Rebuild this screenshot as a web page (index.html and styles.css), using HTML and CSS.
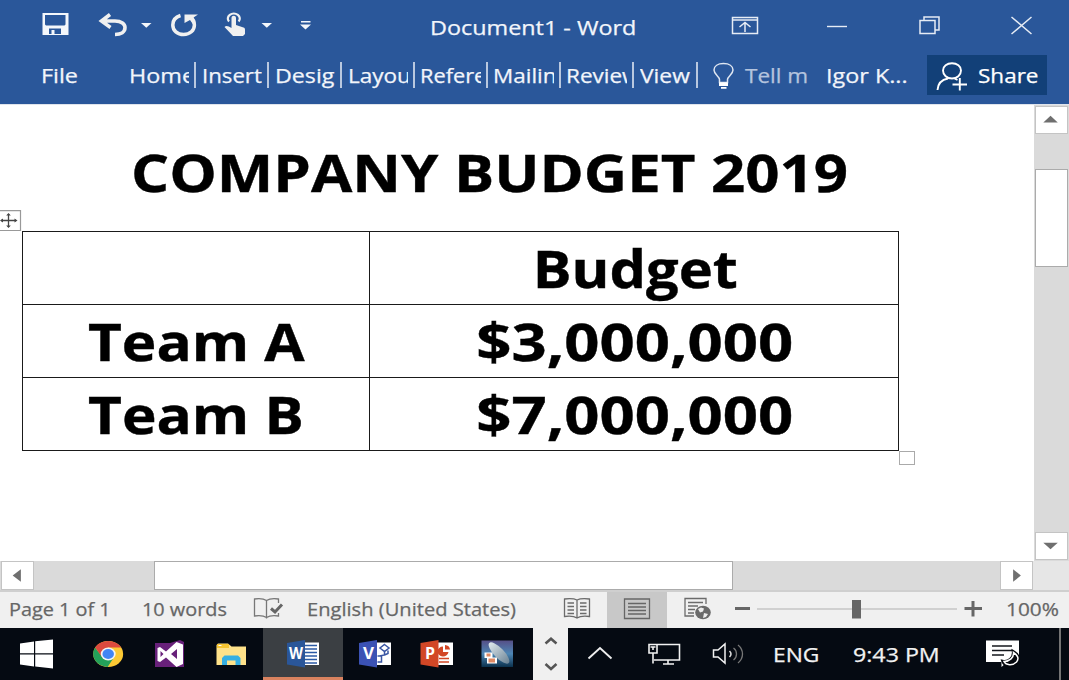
FILE: index.html
```html
<!DOCTYPE html>
<html lang="en">
<head>
<meta charset="utf-8">
<title>Document1 - Word</title>
<link rel="stylesheet" href="styles.css">
</head>
<body>
<div class="window">
  <header class="ribbon">
    <div class="titlebar">
      <svg viewBox="0 0 84 52"><path fill="#f4f7fb" fill-rule="evenodd" d="M42.500 13h26v22h-26zM45 15v9.500l1 1h18.500l1-1V15zM49 28.500V34h2.500v-4h3V34H61v-5.500z"/></svg>
      <svg viewBox="84 0 50 52"><path d="M110 14.500l-8.500 6.500 9 6.500M103 21h12c6.500 0 10 3 10 6.500 0 4.500-4 7-10 7" fill="none" stroke="#f0f0f0" stroke-width="3.600"/></svg>
      <svg viewBox="134 0 26 52"><path d="M141 23h10.500l-5.200 4.800z" fill="#f4f7fb"/></svg>
      <svg viewBox="160 0 50 52"><path d="M180.500 15.500c-5 1.500-7.700 5-7.700 9.500 0 5.600 4.500 9.500 10.800 9.500s10.800-4 10.800-9.500c0-3.500-1.400-6-4-8" fill="none" stroke="#f0f0f0" stroke-width="3.500"/><path d="M184.500 14.500h13.500l-4.500 3v7.500l-3.500-5-5.500 3z" fill="#f0f0f0"/></svg>
      <svg viewBox="210 0 44 52"><path d="M229 21.500a6 5 0 1 1 9.600 0" fill="none" stroke="#f0f0f0" stroke-width="2.200"/><path d="M231.500 18c0-3 4.500-3 4.500 0v7l7.500 2.500c1 .4 1.500 1 1.500 2.500V34l-2 2h-10l-8.500-9c1.500-2 4-1 7 1z" fill="#f0f0f0"/></svg>
      <svg viewBox="254 0 26 52"><path d="M261.500 23H272l-5.200 4.800z" fill="#f4f7fb"/></svg>
      <svg viewBox="280 0 50 52"><path d="M301 21h9.500v1.600H301zM300 24.500h11l-5.500 5z" fill="#f4f7fb"/></svg>
      <div class="doc-name"><span class="wide w17">Document1 - Word</span></div>
      <svg viewBox="700 0 90 52"><path d="M732.500 17.500h25v16h-25zM732.500 20h25M745 32v-9M739.500 27l5.500-4.500 5.500 4.500" fill="none" stroke="#e6ecf5" stroke-width="1.500"/></svg>
      <svg viewBox="790 0 90 52"><path d="M827 26.500h20" stroke="#e6ecf5" stroke-width="1.400"/></svg>
      <svg viewBox="880 0 95 52"><path d="M920 20.500h15v13h-15zM924 20v-3h15v13h-4" fill="none" stroke="#e6ecf5" stroke-width="1.500"/></svg>
      <svg viewBox="975 0 94 52"><path d="M1011.500 17l20 17M1031.500 17l-20 17" stroke="#e6ecf5" stroke-width="1.500"/></svg>
    </div>
    <nav class="tabs">
      <div class="file"><span class="wide w17">File</span></div>
      <div class="tab"><div><span class="wide w17">Home</span></div></div>
      <div class="tab"><div><span class="wide w11">Insert</span></div></div>
      <div class="tab"><div><span class="wide w155">Desig</span></div></div>
      <div class="tab"><div><span class="wide w12">Layou</span></div></div>
      <div class="tab"><div><span class="wide w09">Refere</span></div></div>
      <div class="tab"><div><span class="wide w12">Mailin</span></div></div>
      <div class="tab"><div><span class="wide w12">Review</span></div></div>
      <div class="tab last"><div><span class="wide w14">View</span></div></div>
      <svg class="bulb" viewBox="698 52 47 52"><path d="M719.500 82.500v-3c0-3-5.500-5-5.500-9.500 0-4 4-6.500 9.500-6.500s9.500 2.500 9.500 6.500c0 4.500-5.500 6.500-5.500 9.500v3z" fill="none" stroke="#dfe6f1" stroke-width="1.500"/><path d="M719 82.500h9v3.500h-9zM721 87h5.500v1.800H721z" fill="#fff"/></svg>
      <div class="tell"><span class="wide w12">Tell m</span></div>
      <div class="user"><span class="wide w17">Igor K...</span></div>
      <button class="share"><svg viewBox="927 55 51 40"><path d="M937.500 90c.5-7 5-10.500 10.500-11.500M961 70.500c0 4.500-4 8-9 8s-9-3.500-9-8 4-7.200 9-7.200 9 3 9 7.200zM954.500 78.500l3 1.500M952.500 84.500H967M959.800 78v12.500" fill="none" stroke="#fff" stroke-width="1.900"/></svg><span class="wide w12">Share</span></button>
    </nav>
  </header>
  <main class="workspace">
    <section class="page">
      <h1><span class="wide w15">COMPANY BUDGET 2019</span></h1>
      <svg class="move-handle" viewBox="0 0 22 22"><path d="M-1 .7H20.500V20.500H-1" fill="#fff" stroke="#999" stroke-width="1.200"/><path d="M1 10.500h15M8.500 4v13" stroke="#444" stroke-width="1.300"/><path d="M0 10.500l3-2v4zM17.500 10.500l-3-2v4zM8.500 3l-2.300 2.500h4.600zM8.500 18l-2.300-2.500h4.600z" fill="#444"/></svg>
      <div class="table">
        <div class="cell"></div><div class="cell"><span class="wide w11">Budget</span></div>
        <div class="cell"><span class="wide w12">Team A</span></div><div class="cell"><span class="wide w19">$3,000,000</span></div>
        <div class="cell"><span class="wide w12">Team B</span></div><div class="cell"><span class="wide w19">$7,000,000</span></div>
        <i class="resize-handle"></i>
      </div>
    </section>
    <div class="vscroll">
      <div class="sbtn"><svg viewBox="0 0 32 27"><path d="M7.500 16L15 9l7.500 7z" fill="#6f6f6f"/></svg></div>
      <div class="track"></div>
      <div class="thumb"></div>
      <div class="track"></div>
      <div class="sbtn"><svg viewBox="0 0 32 27"><path d="M7.500 10h15L15 17z" fill="#6f6f6f"/></svg></div>
    </div>
  </main>
  <div class="hscroll">
    <div class="sbtn"><svg viewBox="0 0 32 28"><path d="M19.500 7.500v13L11 14z" fill="#6f6f6f"/></svg></div>
    <div class="track"></div>
    <div class="thumb"></div>
    <div class="track"></div>
    <div class="sbtn"><svg viewBox="0 0 32 28"><path d="M12.500 7.500v13L20.500 14z" fill="#6f6f6f"/></svg></div>
    <div class="corner"></div>
  </div>
  <footer class="status">
    <div class="label"><span class="wide w07">Page 1 of 1</span></div>
    <div class="label"><span class="wide w07">10 words</span></div>
    <svg viewBox="250 592 57 36"><path d="M266.500 600.500c-3-2-8-2-12-1.500v17c4-.5 9-.5 12 1.500 3-2 8-2 12-1.500v-3M278.500 603v-4c-4-.5-9-.5-12 1.500v18" fill="none" stroke="#777" stroke-width="1.300"/><path d="M271 608.500l4 3.500 7-7.500" fill="none" stroke="#666" stroke-width="3"/></svg>
    <div class="label"><span class="wide w09">English (United States)</span></div>
    <svg viewBox="547 592 60 36"><path d="M577 600c-3-1.500-8-1.500-12.500-1v17.500c4-.5 9.500-.5 12.500 1.500 3-2 8-2 12.500-1.500V599c-4.500-.5-9.500-.5-12.500 1zv18M567.500 603h6.500M567.500 606.500h6.500M567.500 610h6.500M567.500 613.500h6.500M580 603h6.500M580 606.500h6.500M580 610h6.500M580 613.500h6.500" fill="none" stroke="#6b6b6b" stroke-width="1.300"/></svg>
    <svg class="selected" viewBox="607 592 60 36"><path d="M624.500 599h25v19.500h-25zM628 603.500h18M628 607h18M628 610.500h18M628 614h18" fill="none" stroke="#666" stroke-width="1.300"/></svg>
    <svg viewBox="667 592 60 36"><path d="M706 604v-5.500h-21V616h9M688 602.500h15M688 606h10M688 609.500h7M688 613h6" fill="none" stroke="#6b6b6b" stroke-width="1.300"/><ellipse cx="703" cy="612.500" rx="7.800" ry="6.800" fill="#6b6b6b"/><path d="M698 609l3-1.500 3 1-1 3-3 1zM704 613l4 1-2 3-3 1z" fill="#eee"/></svg>
    <svg viewBox="727 592 272 36"><path d="M757 609h200" stroke="#b0b0b0" stroke-width="1.200"/><path d="M735 608.500h15M964.500 608.500H982M973 601v15.500" stroke="#666" stroke-width="3"/><path d="M852 600h9v18.500h-9z" fill="#666"/></svg>
    <div class="label zoom"><span class="wide w12">100%</span></div>
  </footer>
  <div class="taskbar">
    <svg viewBox="0 628 78 52"><path fill="#fff" d="M20 643.500l14-2v11.700H20zM35.200 641.300L53 639.500v13.700H35.200zM20 654.500h14v12l-14-2zM35.200 654.500H53v14l-17.800-2z"/></svg>
    <svg viewBox="78 628 60 52"><g transform="translate(108.200 654) scale(1.150 1)"><circle r="13" fill="#fcc934"/><path d="M-11.300-6.500A13 13 0 0 0-.5 13L5.200 3-5.200 3z" fill="#24a15a"/><path d="M-11.300-6.500A13 13 0 0 1 11.300-6.500L0-6.500-5.500 3z" fill="#dc4a3e"/><circle r="6.500" fill="#f4f4f4"/><circle r="5" fill="#4285f4"/></g></svg>
    <svg viewBox="138 628 62 52"><path fill="#68217a" d="M155 643h15l10-3 4 2v25h-29z"/><path d="M157.500 648l2.500-1 6 4.500 10.500-9.500 6.500 2.500v19.500l-6.500 3-10.500-9.500-6 4.500-2.500-1zM160.500 651v6l3-3zM177 649l-6 5 6 5z" fill="#fff" fill-rule="evenodd"/></svg>
    <svg viewBox="200 628 63 52"><path d="M216.500 645l1.500-1.500h10l3.500 3H246v18.500h-29.500z" fill="#ffe28a"/><path d="M217 644h12v4h-12z" fill="#f7c531"/><path d="M218.500 645h3v1h-3z" fill="#fff"/><path d="M222 665v-7l2.500-2.500H238l2.500 2.500v7h-5v-4.500h-8.500v4.500z" fill="#36afe3"/></svg>
    <div class="active"><svg viewBox="263 628 80 49"><path d="M304 642.500h15V665h-15z" fill="#fff"/><path d="M305 645.500h12M305 649h12M305 652.500h12M305 656h12M305 659.500h12M305 663h12" stroke="#2b5aa5" stroke-width="1.300"/><path d="M287 643l18-3v27.500l-18-3z" fill="#2a5699"/><text x="289" y="659" class="glyph" textLength="14" lengthAdjust="spacingAndGlyphs">W</text></svg></div>
    <svg viewBox="343 628 62 52"><path d="M376 642.500h15V665h-15z" fill="#fff"/><g fill="none" stroke="#3955a3" stroke-width="1.500"><path d="M384.500 644.500l4.500 3.500-4.500 3.500-4.500-3.500zM384.500 651.500v3.500l-5 1M384.500 655l3.500-1.500v-3M377.500 656h4v6h-4"/></g><path d="M359 643l18-3v27.500l-18-3z" fill="#3b52b4"/><text x="363" y="659" class="glyph" textLength="11" lengthAdjust="spacingAndGlyphs">V</text></svg>
    <svg viewBox="405 628 61 52"><path d="M437 642.500h16V665h-16z" fill="#fff"/><path d="M439 658.500h10M439 662h10" stroke="#d24726" stroke-width="1.500"/><path d="M443 646.500a5.500 5 0 1 0 5.500 5.500H443z" fill="#d24726"/><path d="M445 645a5.500 5 0 0 1 5 4.500h-5z" fill="#d24726"/><path d="M420.500 643l18-3v27.500l-18-3z" fill="#d24726"/><text x="425" y="659" class="glyph" textLength="10" lengthAdjust="spacingAndGlyphs">P</text></svg>
    <svg viewBox="466 628 67 52"><defs><linearGradient id="sea" x2="0" y2="1"><stop stop-color="#564f87"/><stop offset=".5" stop-color="#4d86b5"/><stop offset="1" stop-color="#0b314d"/></linearGradient><linearGradient id="shell"><stop stop-color="#dfe8ec"/><stop offset="1" stop-color="#6c8496"/></linearGradient></defs><path d="M481.500 640.500h31.500V667h-31.500z" fill="url(#sea)"/><ellipse cx="499" cy="653" rx="14" ry="5" transform="rotate(46 499 653)" fill="url(#shell)"/><path d="M484.500 652.500h8v5h4.500v6h-10v-5.500h-2.500z" fill="#fff"/><path d="M486.500 653.500h4v3h-4zM488.500 658.500h6.500v4h-6.500z" fill="#df8a64"/></svg>
    <svg class="updown" viewBox="533 628 35 52"><path d="M545.500 643.500l5.500-4.800 5.500 4.800M545.500 664l5.500 5 5.500-5" fill="none" stroke="#555" stroke-width="2.500"/></svg>
    <svg viewBox="568 628 64 52"><path d="M588.500 658.500l11.500-10.500 11.500 10.500" fill="none" stroke="#eee" stroke-width="1.900"/></svg>
    <svg viewBox="632 628 66 52"><path d="M657 644.500h22.500v15.500h-25.500M668 660v3.500M663 664h11M649 644.500h8v8.500h-8zM653 653v10.500M650.500 647h5M653 647v3" fill="none" stroke="#f2f2f2" stroke-width="1.600"/></svg>
    <svg viewBox="698 628 70 52"><path d="M713.500 650h4.500l7-6v19l-7-6h-4.500z" fill="none" stroke="#f2f2f2" stroke-width="1.500"/><path d="M729.500 651c2 2 2 4 0 6" fill="none" stroke="#ddd" stroke-width="1.500"/><path d="M733.500 648c4 3 4 9 0 12M738 645c6 5 6 13 0 18" fill="none" stroke="#777" stroke-width="1.300"/></svg>
    <div class="lang"><span class="wide w14">ENG</span></div>
    <div class="clock"><span class="wide w155">9:43 PM</span></div>
    <svg viewBox="960 628 98 52"><path d="M986 640.500h33V662h-12l-5.500 5v-5H986z" fill="#fff"/><path d="M992 646h20M992 650.500h20M992 655h12" stroke="#14171c" stroke-width="1.400"/><path d="M1013 651c4.500 2.500 7.500 7 4.500 11.500-4.500 5.500-13 4.500-15-1.500 6 1.500 11.500-3.500 10.500-10z" fill="#05080e" stroke="#05080e" stroke-width="2.500"/><path d="M1013.500 652.500c4 2.500 6 6 3 9.500-4 4-10.500 3.500-12.500-.5 5.500 0 10-4 9.500-9z" fill="none" stroke="#fff" stroke-width="1.500"/></svg>
    <i class="peek"></i>
  </div>
</div>
</body>
</html>
```
FILE: styles.css
```css
* { box-sizing: border-box; }
body { margin: 0; font: 20px/28px "Open Sans", sans-serif; }
svg { display: block; width: 100%; height: 100%; }

/* Horizontally widened text */
.wide { display: inline-block; white-space: nowrap; transform-origin: 0 50%; -webkit-text-stroke: .25px currentColor; }
.w07 { transform: scaleX(1.073); }
.w09 { transform: scaleX(1.087); }
.w11 { transform: scaleX(1.11); }
.w12 { transform: scaleX(1.125); }
.w14 { transform: scaleX(1.14); }
.w15 { transform: scaleX(1.152); }
.w155 { transform: scaleX(1.16); }
.w17 { transform: scaleX(1.168); }
.w19 { transform: scaleX(1.185); }

.window { width: 1069px; height: 680px; overflow: hidden; display: grid; grid-template-rows: 104px 457px 31px 36px 52px; background: #fff; }

.ribbon { background: #2a579a; color: #f2f5fa; display: grid; grid-template-rows: 52px 52px; }
.titlebar { display: grid; grid-template-columns: 84px 50px 26px 50px 44px 26px 50px 370px 90px 90px 95px 94px; }
.doc-name { padding: 14px 0 0 99.500px; }
.tabs { display: grid; grid-template-columns: 123px repeat(7, 73px) 64px 47px 81px 101px 120px; padding-top: 10px; height: 52px; }
.file { padding-left: 41px; }
.tab { height: 26px; border-right: 2px solid #b9c8df; padding: 0 5px 0 6px; }
.tab > div { overflow: hidden; height: 32px; }
.tab:nth-child(n+6) { padding-left: 5px; }
.tab.last { padding: 0 2px 0 6px; }
.bulb { height: 52px; margin-top: -10px; }
.tell { color: #b4c4de; }
.share { display: flex; height: 40px; margin-top: -7px; padding: 0; border: 0; background: #124078; color: #fff; font: inherit; align-items: center; }
.share svg { width: 51px; flex: none; }
.share .wide { padding-top: 2px; }

.workspace { display: grid; grid-template-columns: 1034px 35px; border-top: 1px solid #dfe4ec; }
.page { padding: 31px 0 0 22px; font-weight: 700; font-size: 52px; line-height: 72px; }
.page .wide { -webkit-text-stroke: .4px #000; }
.page h1 { margin: 0; font: inherit; padding-left: 109px; height: 95px; }
.move-handle { position: absolute; left: 0; top: 210px; width: 22px; height: 22px; }
.table { position: relative; display: grid; grid-template: 73px 73px 73px / 347px 529px; width: 877px; border: solid #1a1a1a; border-width: 1px 0 0 1px; }
.cell { border: solid #1a1a1a; border-width: 0 1px 1px 0; text-align: center; }
.cell .wide { transform-origin: 50% 50%; }
.cell:nth-child(even) { padding-left: 2px; }
.resize-handle { position: absolute; right: -16px; bottom: -14px; width: 16px; height: 14px; border: 1px solid #aaa; background: #fff; }

.vscroll { background: #dadada; padding: 1px 1px 1px 1px; display: grid; grid-template-rows: 28px 35px 98px 1fr 28px; }
.thumb { background: #fff; border: 1px solid #ababab; }
.sbtn { background: #fff; border: 1px solid #c4c4c4; }
.hscroll { background: #dadada; display: grid; grid-template-columns: 33px 120px 579px 267px 33px 36px; padding-left: 1px; border-bottom: 2px solid #cfcfcf; }
.corner { background: #e6e6e6; }

.status { background: #f0f0f0; color: #666; font-size: 18.500px; display: grid; grid-template-columns: 132px 108px 57px 240px 60px 60px 60px 272px 70px; padding-left: 10px; }
.label { padding-top: 3px; }
.label:first-child { margin-left: -1px; }
.zoom { padding-left: 7px; }
.selected { background: #c8c8c8; }

.taskbar { background: #050a12; color: #f2f2f2; display: grid; grid-template-columns: 78px 60px 62px 63px 80px 62px 61px 67px 35px 64px 66px 70px 80px 112px 98px 11px; }
.active { background: #3b3f43; border-bottom: 3px solid #d9825f; }
.updown { background: #f0f0f0; }
.lang { padding: 13px 0 0 5px; }
.clock { padding: 13px 0 0 5px; }
.peek { border-left: 2px solid #747474; margin-left: 1px; }
.glyph { font: 700 16px "Open Sans", sans-serif; fill: #fff; }
```
